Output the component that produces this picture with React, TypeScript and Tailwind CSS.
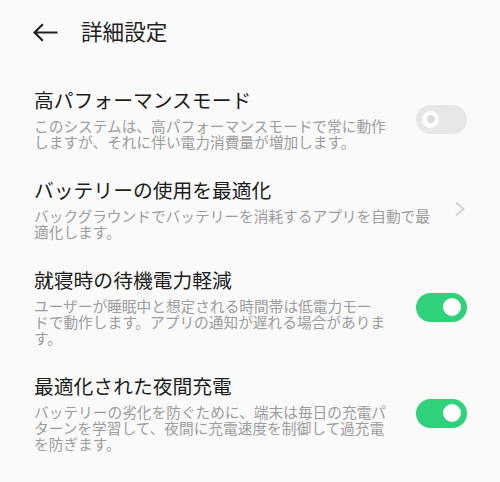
import type { ReactNode } from 'react'

const font = { fontFamily: '"Noto Sans CJK JP", "Noto Sans", sans-serif' }

function Toggle({ on }: { on: boolean }) {
  if (on) {
    return (
      <span className="flex h-[29px] w-[51px] items-center justify-end rounded-full bg-[#2fd27b] pr-[6px]">
        <span className="h-[18px] w-[18px] rounded-full bg-white" />
      </span>
    )
  }
  return (
    <span className="flex h-[29px] w-[51px] items-center rounded-full bg-[#e7e7e7] pl-[6px]">
      <span className="flex h-[17px] w-[17px] items-center justify-center rounded-full bg-white">
        <span className="h-[8px] w-[8px] rounded-full bg-[#dcdcdc]" />
      </span>
    </span>
  )
}

function Chevron() {
  return (
    <svg width="12" height="16" viewBox="0 0 12 16" className="mr-[1px]">
      <path d="M2 1.5 L9.5 8 L2 14.5" fill="none" stroke="#c9c9c9" strokeWidth="1.6" />
    </svg>
  )
}

function Row({ title, lines, right }: { title: string; lines: string[]; right: ReactNode }) {
  return (
    <div className="flex items-center py-[14px] pl-[34px] pr-[33px]">
      <div className="min-w-0 flex-1">
        <p className="whitespace-nowrap text-[19.8px] leading-[24px] text-[#1c1c1c]">{title}</p>
        <div className="mt-[6px] text-[14.7px] leading-[16px] text-[#9c9c9c]">
          {lines.map((l) => (
            <span key={l} className="block whitespace-nowrap">
              {l}
            </span>
          ))}
        </div>
      </div>
      <div className="flex w-[51px] shrink-0 justify-end">{right}</div>
    </div>
  )
}

export default function App() {
  return (
    <div className="h-[482px] w-[500px] overflow-hidden bg-[#fafafa]" style={font}>
      <div className="flex h-[62px] items-center pl-[33px]">
        <svg width="25" height="19" viewBox="0 0 25 19" className="mt-[3px]">
          <path d="M1.5 9.5 H24.5 M9.8 1.2 L1.5 9.5 L9.8 17.8" fill="none" stroke="#222" strokeWidth="2.2" />
        </svg>
        <h1 className="ml-[23px] text-[21.6px] leading-[28px] text-[#1f1f1f]">詳細設定</h1>
      </div>
      <div className="pt-[12px]">
        <Row
          title="高パフォーマンスモード"
          lines={['このシステムは、高パフォーマンスモードで常に動作', 'しますが、それに伴い電力消費量が増加します。']}
          right={<Toggle on={false} />}
        />
        <Row
          title="バッテリーの使用を最適化"
          lines={['バックグラウンドでバッテリーを消耗するアプリを自動で最', '適化します。']}
          right={<Chevron />}
        />
        <Row
          title="就寝時の待機電力軽減"
          lines={[
            'ユーザーが睡眠中と想定される時間帯は低電力モー',
            'ドで動作します。アプリの通知が遅れる場合がありま',
            'す。',
          ]}
          right={<Toggle on />}
        />
        <Row
          title="最適化された夜間充電"
          lines={[
            'バッテリーの劣化を防ぐために、端末は毎日の充電パ',
            'ターンを学習して、夜間に充電速度を制御して過充電',
            'を防ぎます。',
          ]}
          right={<Toggle on />}
        />
      </div>
    </div>
  )
}
